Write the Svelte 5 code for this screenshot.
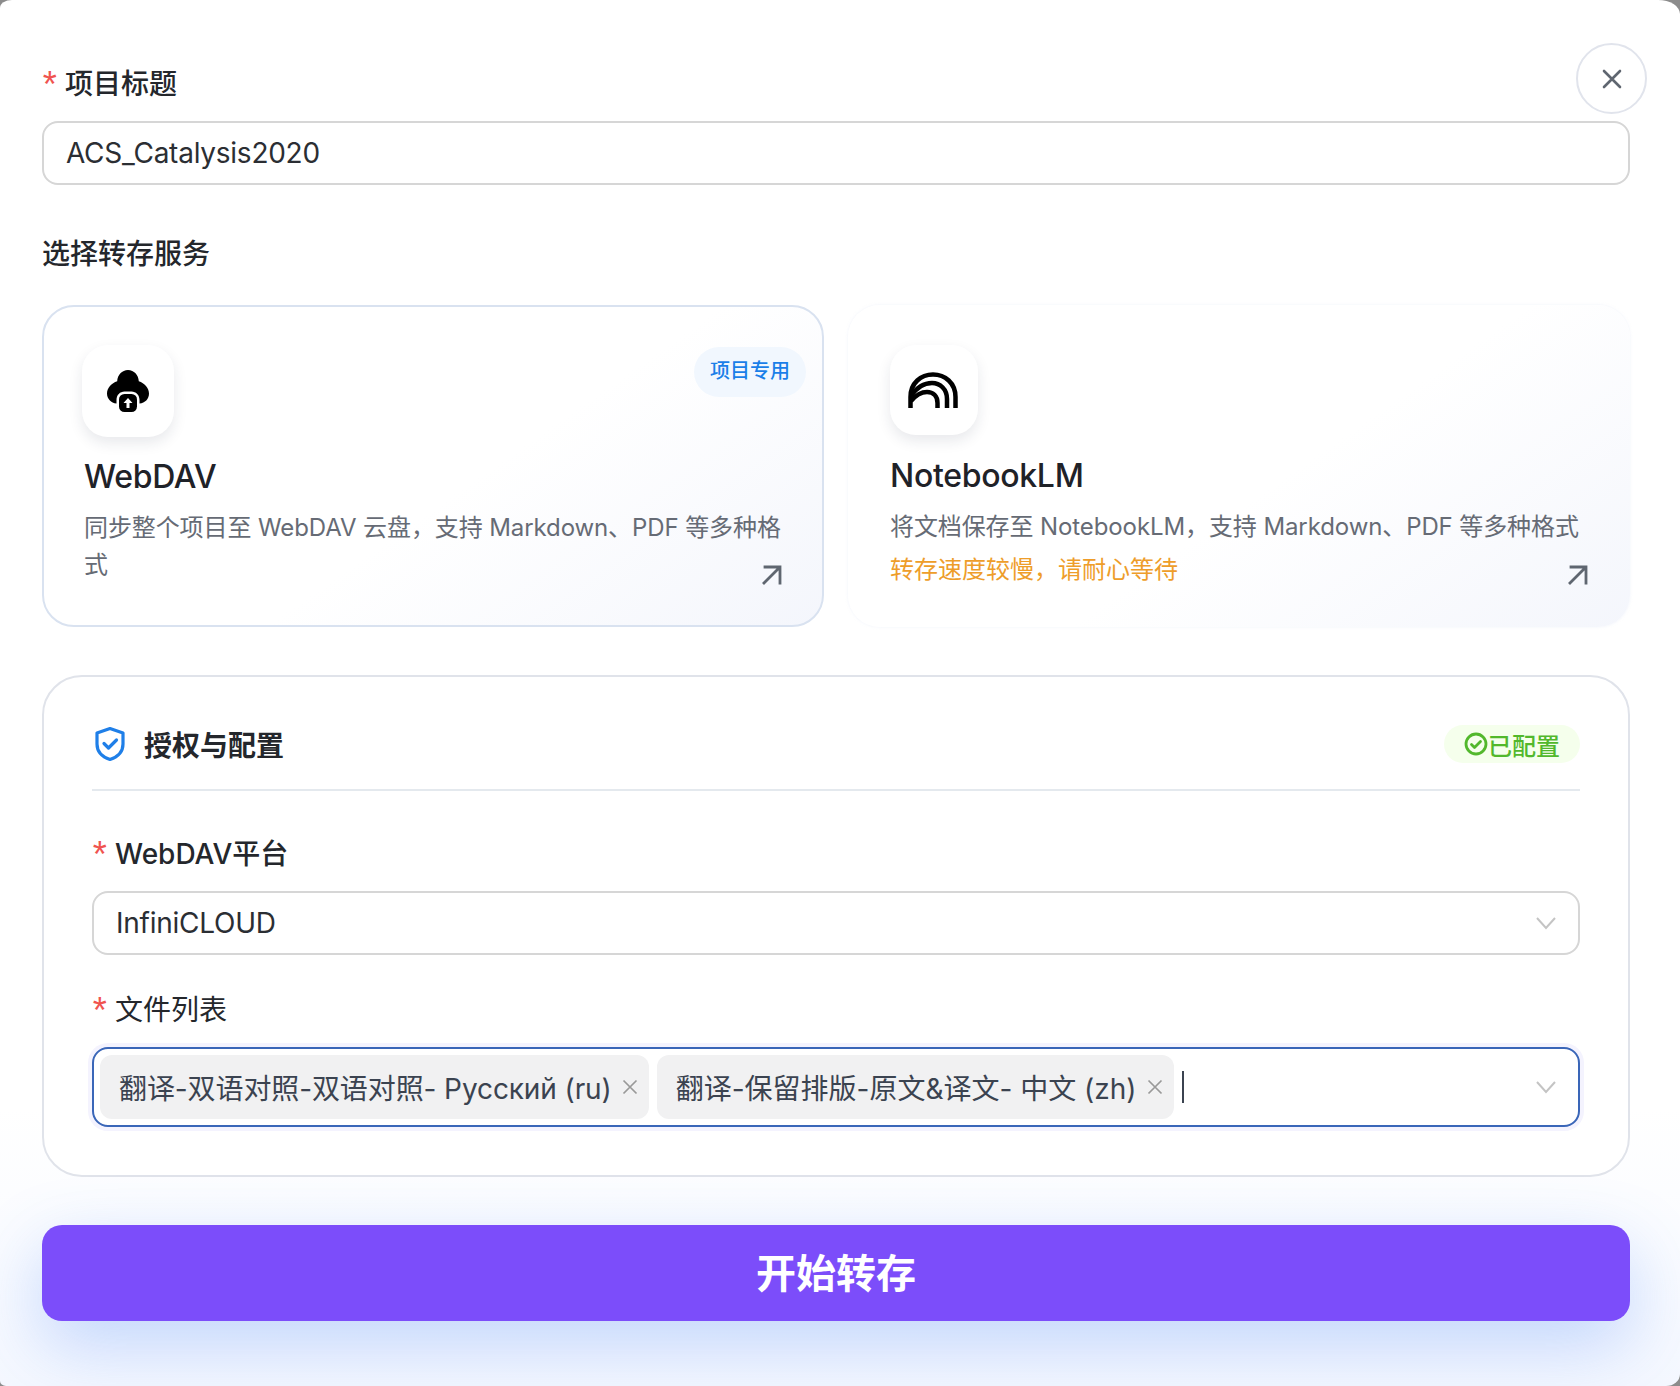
<script>
    const files = [
        '翻译-双语对照-双语对照- Русский (ru)',
        '翻译-保留排版-原文&译文- 中文 (zh)'
    ];
</script>

<div class="modal">
    <button class="close" aria-label="关闭">
        <svg width="24" height="24" viewBox="0 0 24 24" fill="none" stroke="#5f6670" stroke-width="2.6" stroke-linecap="round">
            <path d="M4 4l16 16M20 4L4 20" />
        </svg>
    </button>

    <div class="label"><span class="req">*</span>项目标题</div>
    <div class="field title-input">ACS_Catalysis2020</div>

    <div class="label section">选择转存服务</div>

    <div class="services">
        <div class="service active">
            <div class="service-head">
                <div class="logo">
                    <svg width="44" height="44" viewBox="0 0 44 44">
                        <path d="M22 1c6 0 10.500 5 10.800 11.200C38.500 14 43 19 43 24.500c0 5.500-4 9.500-9.500 10V31c0-5-3.500-8.500-8-8.500h-7c-4.500 0-8 3.500-8 8.500v3.500C5 34 1 29.800 1 24.500 1 19 5.500 14 11.200 12.200 11.500 6 16 1 22 1z" fill="#000" />
                        <rect x="13" y="25" width="18" height="18" rx="5.500" fill="#000" />
                        <path d="M22 29l-4.500 5h3V39h3v-5h3z" fill="#fff" />
                    </svg>
                </div>
                <span class="tag">项目专用</span>
            </div>
            <div class="name">WebDAV</div>
            <p class="desc">同步整个项目至 WebDAV 云盘，支持 Markdown、PDF 等多种格式</p>
            <svg class="go" width="24" height="24" viewBox="0 0 24 24" fill="none" stroke="#5f6670" stroke-width="2.800" stroke-linecap="square">
                <path d="M5 4h15v16M19 5L4 20" />
            </svg>
        </div>

        <div class="service">
            <div class="service-head">
                <div class="logo small">
                    <svg width="50" height="38" viewBox="0 0 50 38" fill="none" stroke="#000" stroke-width="4.500">
                        <path d="M47.500 36V25C47.500 11 37 2.500 25 2.500S2.500 11 2.500 25V36" />
                        <path d="M39 36V27C39 17 32 11 24 11c-8 0-15 4-21 13" />
                        <path d="M29.500 36V31C29.500 24 25 20 19 20c-6 0-11 3-16 9" />
                    </svg>
                </div>
            </div>
            <div class="name">NotebookLM</div>
            <p class="desc">将文档保存至 NotebookLM，支持 Markdown、PDF 等多种格式</p>
            <p class="warn">转存速度较慢，请耐心等待</p>
            <svg class="go" width="24" height="24" viewBox="0 0 24 24" fill="none" stroke="#5f6670" stroke-width="2.800" stroke-linecap="square">
                <path d="M5 4h15v16M19 5L4 20" />
            </svg>
        </div>
    </div>

    <div class="config">
        <div class="config-head">
            <div class="config-title">
                <svg width="32" height="36" viewBox="0 0 32 36" fill="none" stroke="#1f7fe8" stroke-width="3.200" stroke-linejoin="round" stroke-linecap="round">
                    <path d="M16 2.500L29 7v11c0 8-5.500 13-13 15.500C8.500 31 3 26 3 18V7z" />
                    <path d="M10 17.500l4.500 4.500 8-8" />
                </svg>
                <span>授权与配置</span>
            </div>
            <span class="status">
                <svg width="24" height="24" viewBox="0 0 24 24" fill="none" stroke="#52b82c" stroke-width="2.800" stroke-linecap="round" stroke-linejoin="round">
                    <circle cx="12" cy="12" r="10" />
                    <path d="M7.500 12.500l3 3 6-6" />
                </svg>
                已配置
            </span>
        </div>

        <div class="label"><span class="req">*</span>WebDAV平台</div>
        <div class="field select">
            <span>InfiniCLOUD</span>
            <svg class="chevron" width="22" height="14" viewBox="0 0 22 14" fill="none" stroke="#c4c4c4" stroke-width="2">
                <path d="M2 2l9 10 9-10" />
            </svg>
        </div>

        <div class="label files-label"><span class="req">*</span><span class="plain">文件列表</span></div>
        <div class="field multi">
            {#each files as file}
                <span class="chip">
                    {file}
                    <svg width="16" height="16" viewBox="0 0 16 16" fill="none" stroke="#999" stroke-width="1.700">
                        <path d="M1.500 1.500l13 13M14.500 1.500l-13 13" />
                    </svg>
                </span>
            {/each}
            <span class="caret"></span>
            <svg class="chevron" width="22" height="14" viewBox="0 0 22 14" fill="none" stroke="#c4c4c4" stroke-width="2">
                <path d="M2 2l9 10 9-10" />
            </svg>
        </div>
    </div>

    <button class="submit">开始转存</button>
</div>

<style>
    :global(body) {
        margin: 0;
        background-color: #8c8c8c;
    }

    .modal {
        position: relative;
        box-sizing: border-box;
        height: 1386px;
        padding: 69px 50px 0 42px;
        border-radius: 12px 22px 14px 6px / 8px 14px 12px 5px;
        background: linear-gradient(180deg, #ffffff 0%, #ffffff 80%, #f5f8ff 100%);
        overflow: hidden;
        font-family: Inter, "Noto Sans CJK SC", sans-serif;
        color: #24272c;
    }

    .close {
        position: absolute;
        top: 43px;
        right: 33px;
        width: 71px;
        height: 71px;
        padding: 0;
        display: flex;
        align-items: center;
        justify-content: center;
        background-color: #fff;
        border: 2px solid #e1e4ec;
        border-radius: 50%;
    }

    .label {
        display: flex;
        align-items: center;
        height: 30px;
        font-size: 28px;
        font-weight: 500;
        line-height: 30px;
    }

    .req {
        width: 23px;
        margin-left: -3px;
        padding: 10px 3px 0 0;
        color: #f0544f;
        font-family: "Liberation Mono", monospace;
        font-size: 36px;
        font-weight: 400;
    }

    .plain {
        font-weight: 400;
    }

    .section {
        margin-top: 54px;
    }

    .field {
        box-sizing: border-box;
        display: flex;
        align-items: center;
        height: 64px;
        padding: 0 21px 0 22px;
        background-color: #fff;
        border: 2px solid #d6d6d6;
        border-radius: 16px;
        font-size: 28px;
        letter-spacing: -0.25px;
        color: #2b2e33;
    }

    .title-input {
        margin-top: 22px;
    }

    .services {
        display: grid;
        grid-template-columns: 1fr 1fr;
        gap: 24px;
        margin-top: 36px;
    }

    .service {
        position: relative;
        box-sizing: border-box;
        height: 322px;
        padding: 40px 36px 0 42px;
        border-radius: 32px;
        background: linear-gradient(145deg, #ffffff 55%, #f4f6fc 100%);
        box-shadow: 0 0 3px rgba(210, 218, 240, 0.35);
    }

    .service.active {
        padding-top: 38px;
        padding-left: 40px;
        border: 2px solid #d9e2f0;
        box-shadow: none;
    }

    .service-head {
        display: flex;
        justify-content: space-between;
        align-items: flex-start;
    }

    .logo {
        width: 92px;
        height: 92px;
        display: flex;
        align-items: center;
        justify-content: center;
        border-radius: 26px;
        background-color: #fff;
        box-shadow: 0 6px 14px rgba(30, 40, 70, 0.10);
    }

    .service.active .logo {
        margin-left: -2px;
    }

    .logo.small {
        box-sizing: border-box;
        width: 88px;
        height: 90px;
        padding: 2px 2px 0 0;
    }

    .tag {
        margin: 2px -20px 0 0;
        padding: 0 16px;
        height: 50px;
        line-height: 48px;
        font-size: 20px;
        font-weight: 500;
        color: #1a7fe8;
        background-color: #f1f7fe;
        border-radius: 25px;
    }

    .name {
        margin-top: 21px;
        font-size: 32px;
        font-weight: 500;
        line-height: 40px;
        letter-spacing: -0.3px;
        color: #1f2228;
    }

    .service.active .name {
        margin-top: 20px;
    }

    .desc {
        margin: 12px 0 0;
        font-size: 24px;
        line-height: 37px;
        letter-spacing: -0.1px;
        color: #666b75;
    }

    .warn {
        margin: 6px 0 0;
        font-size: 24px;
        line-height: 38px;
        color: #ee9d2a;
    }

    .go {
        position: absolute;
        right: 40px;
        bottom: 40px;
    }

    .service.active .go {
        right: 38px;
        bottom: 38px;
    }

    .config {
        box-sizing: border-box;
        height: 502px;
        margin-top: 48px;
        padding: 36px 48px 0 48px;
        background-color: #fff;
        border: 2px solid #e0e3ea;
        border-radius: 40px;
    }

    .config-head {
        display: flex;
        justify-content: space-between;
        align-items: center;
        box-sizing: border-box;
        height: 78px;
        padding-bottom: 14px;
        margin-bottom: 48px;
        border-bottom: 2px solid #e4e9ee;
    }

    .config-title {
        display: flex;
        align-items: center;
        gap: 18px;
        font-size: 28px;
        font-weight: 600;
        padding-left: 2px;
    }

    .status {
        display: flex;
        align-items: center;
        height: 38px;
        padding: 0 20px;
        font-size: 24px;
        font-weight: 500;
        color: #52b82c;
        background-color: #f5ffec;
        border-radius: 20px;
    }

    .select {
        margin-top: 22px;
    }

    .chevron {
        margin-left: auto;
    }

    .files-label {
        margin-top: 40px;
    }

    .multi {
        margin-top: 22px;
        height: 80px;
        padding: 0 21px 0 6px;
        gap: 8px;
        border-color: #3a66b8;
        box-shadow: 0 0 0 4px #f4f3fe;
    }

    .chip {
        display: flex;
        align-items: center;
        gap: 10px;
        height: 64px;
        padding: 0 11px 0 19px;
        background-color: #f1f1f2;
        border-radius: 12px;
        letter-spacing: -0.1px;
        color: #3b4350;
    }

    .chip + .chip {
        letter-spacing: 0;
    }

    .caret {
        width: 2px;
        height: 32px;
        background-color: #3b4350;
    }

    .submit {
        display: block;
        width: 100%;
        height: 96px;
        margin-top: 48px;
        padding: 0 0 4px;
        border: none;
        border-radius: 20px;
        background-color: #7c4dfa;
        color: #fff;
        font-family: inherit;
        font-size: 40px;
        font-weight: 600;
        box-shadow: 0 24px 70px rgba(70, 130, 245, 0.3);
    }
</style>
